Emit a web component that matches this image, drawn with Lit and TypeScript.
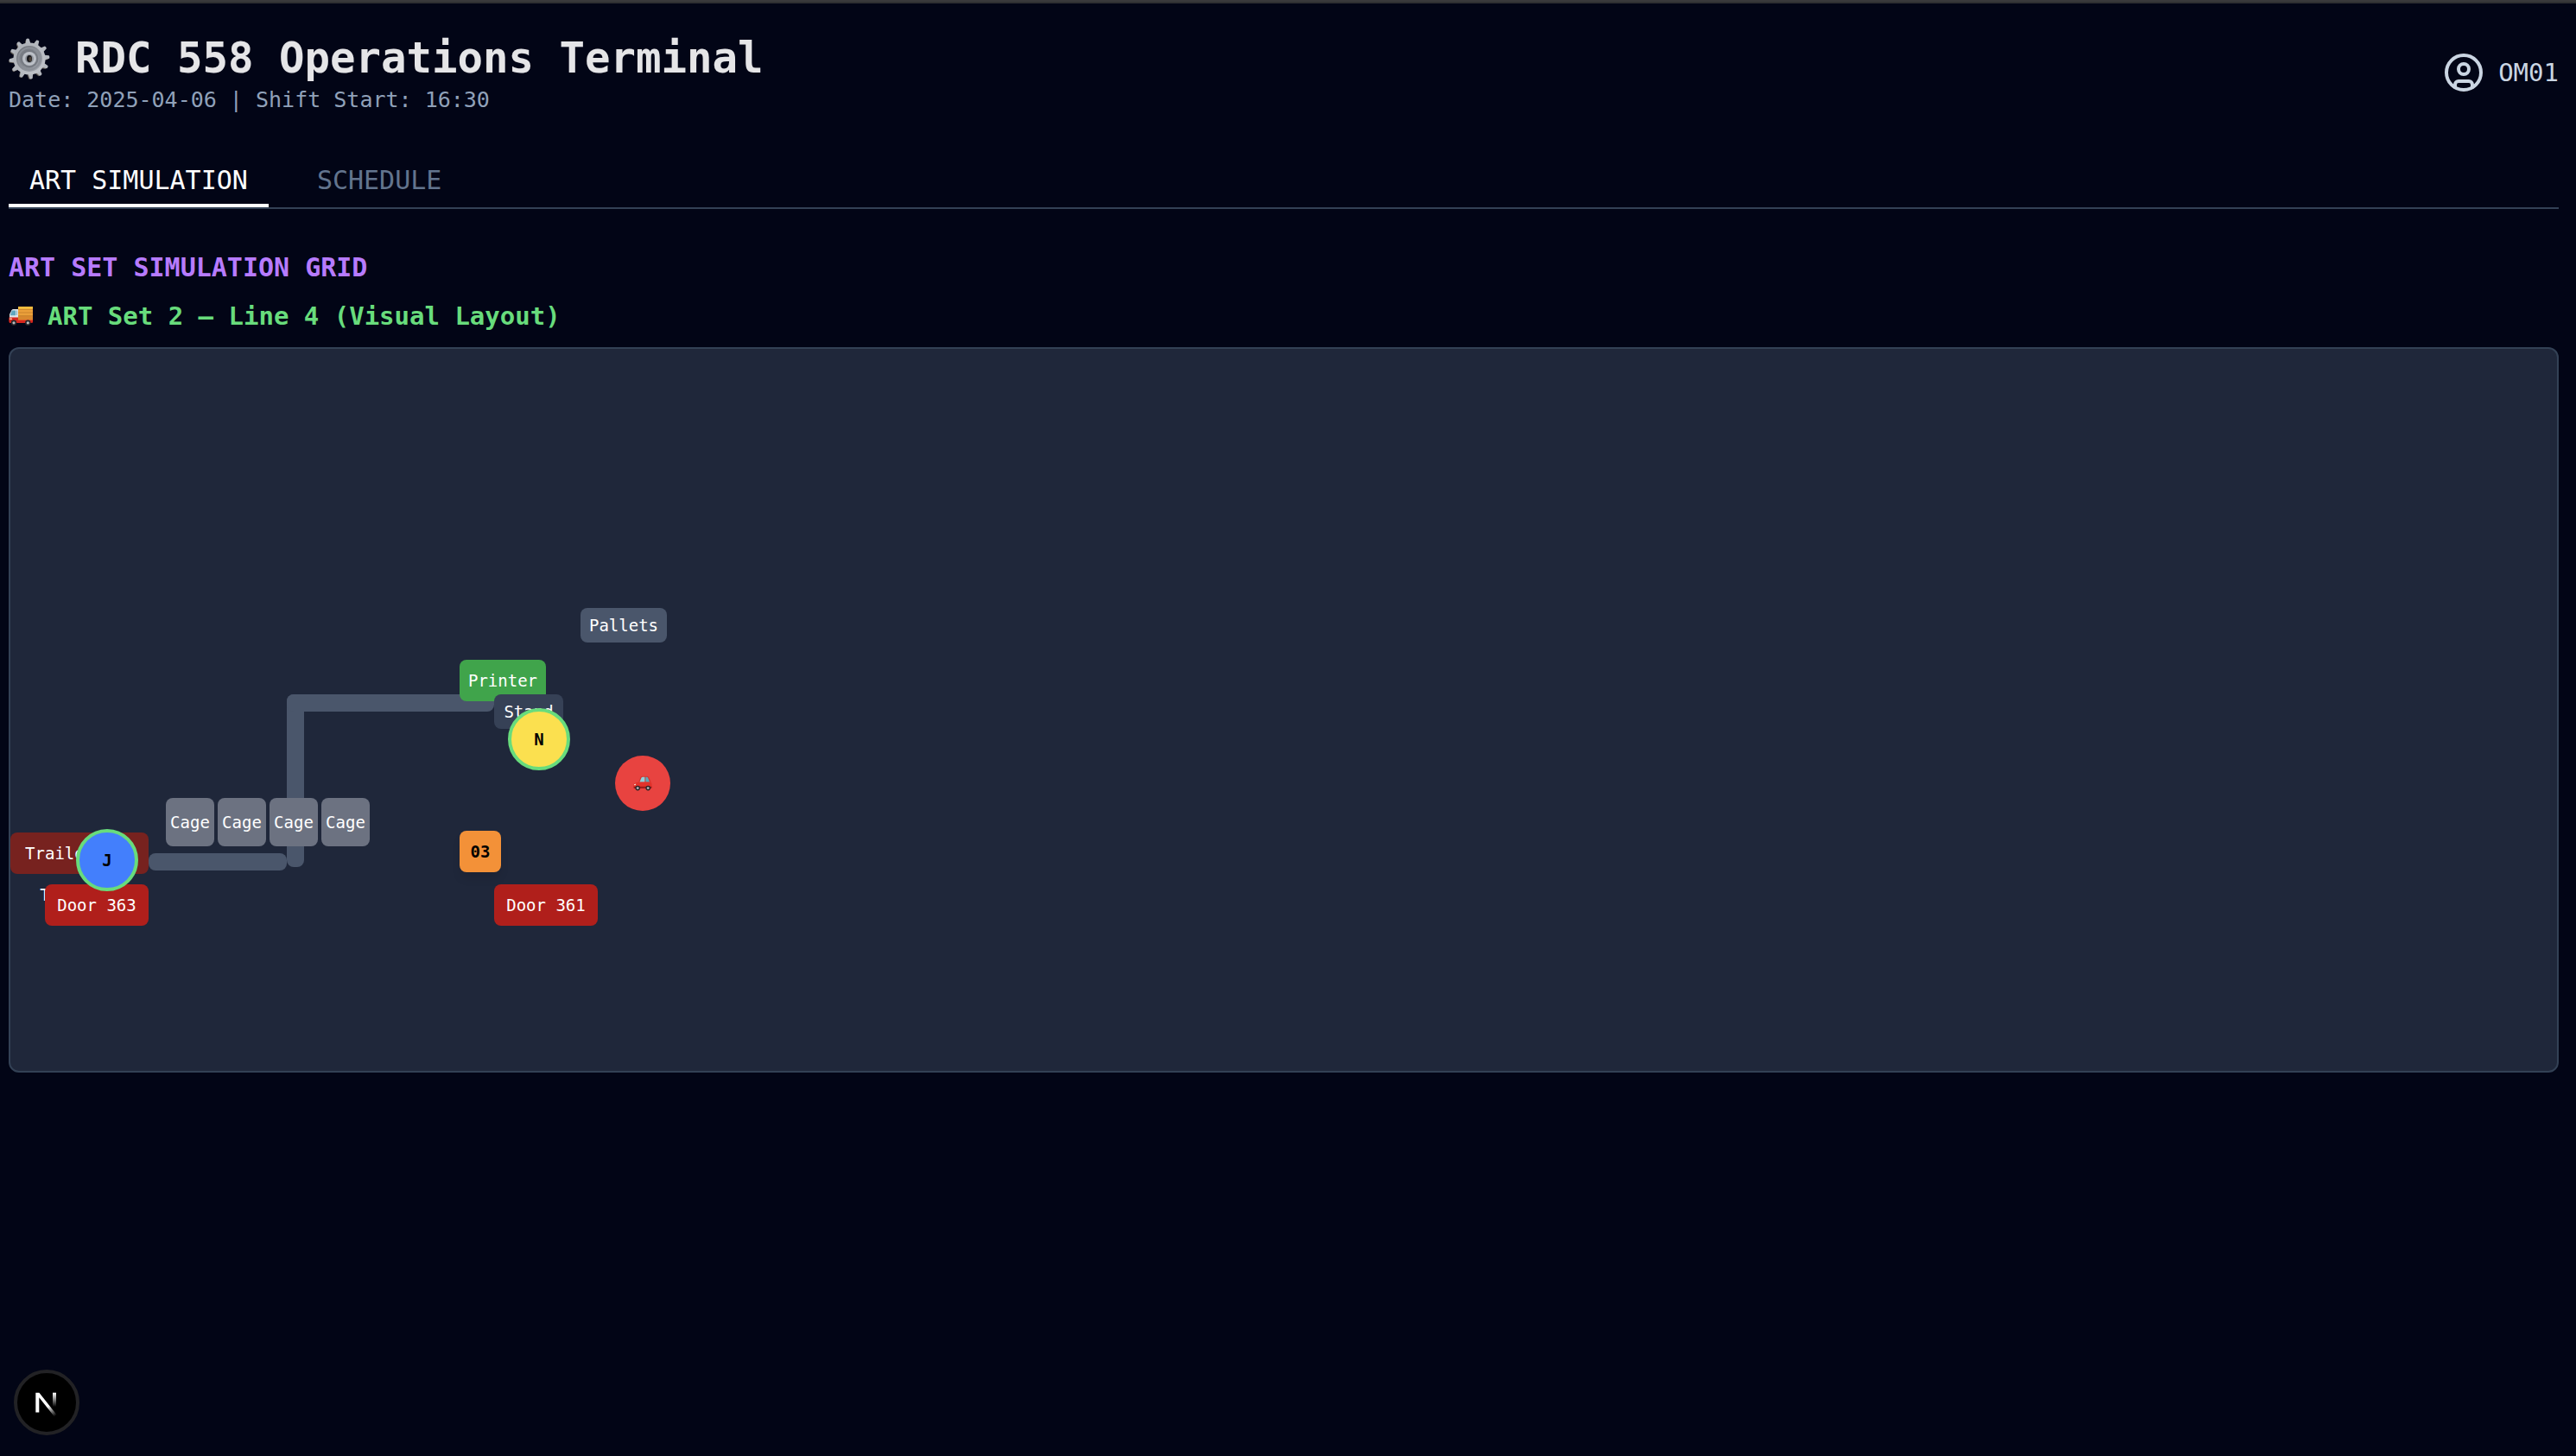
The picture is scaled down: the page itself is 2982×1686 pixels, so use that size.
import { LitElement, html, svg, css } from "lit";
import { customElement, state } from "lit/decorators.js";
import { styleMap } from "lit/directives/style-map.js";
import { classMap } from "lit/directives/class-map.js";

interface GridNode {
  kind: string;
  x: number;
  y: number;
  w: number;
  h: number;
  label?: string;
}

const NODES: GridNode[] = [
  { kind: "trailer", x: 0, y: 560, w: 160, h: 48, label: "Trailer 363" },
  { kind: "caption", x: 34, y: 608, w: 12, h: 48, label: "T" },
  { kind: "door", x: 40, y: 620, w: 120, h: 48, label: "Door 363" },
  { kind: "door", x: 560, y: 620, w: 120, h: 48, label: "Door 361" },
  { kind: "belt", x: 160, y: 584, w: 160, h: 20 },
  { kind: "belt", x: 320, y: 400, w: 20, h: 200 },
  { kind: "belt", x: 320, y: 400, w: 240, h: 20 },
  { kind: "cage", x: 180, y: 520, w: 56, h: 56, label: "Cage" },
  { kind: "cage", x: 240, y: 520, w: 56, h: 56, label: "Cage" },
  { kind: "cage", x: 300, y: 520, w: 56, h: 56, label: "Cage" },
  { kind: "cage", x: 360, y: 520, w: 56, h: 56, label: "Cage" },
  { kind: "printer", x: 520, y: 360, w: 100, h: 48, label: "Printer" },
  { kind: "stand", x: 560, y: 400, w: 80, h: 40, label: "Stand" },
  { kind: "pallets", x: 660, y: 300, w: 100, h: 40, label: "Pallets" },
  { kind: "slot", x: 520, y: 558, w: 48, h: 48, label: "03" },
  { kind: "worker blue", x: 76, y: 556, w: 72, h: 72, label: "J" },
  { kind: "worker yellow", x: 576, y: 416, w: 72, h: 72, label: "N" },
  { kind: "car", x: 700, y: 471, w: 64, h: 64 },
];

const TEETH = Array.from({ length: 12 }, (_, i) => i * 30 - 5);

const gearIcon = html`<svg class="gear" viewBox="0 0 48 48" aria-hidden="true">
  <defs>
    <linearGradient id="metal" x1="0" y1="0" x2="1" y2="1">
      <stop offset="0" stop-color="#a9adb3" />
      <stop offset="1" stop-color="#c3c6cc" />
    </linearGradient>
    <linearGradient id="ring" x1="0" y1="0" x2="1" y2="1">
      <stop offset="0" stop-color="#6b6f76" />
      <stop offset="1" stop-color="#a4a8b0" />
    </linearGradient>
  </defs>
  <g fill="#66615c">
    ${TEETH.map((a) => svg`<path transform=${`translate(-1 1) rotate(${a} 24 24)`} d="M21.2 7 22.4 1.6Q24 .6 25.6 1.6L27 7Z" />`)}
  </g>
  <g fill="#b4b8be">
    ${TEETH.map((a) => svg`<path transform=${`rotate(${a} 24 24)`} d="M21 8 22.3 1Q24 0 25.7 1L27.2 8Z" />`)}
  </g>
  <circle cx="24" cy="24" r="18.6" fill="url(#metal)" />
  <circle cx="24" cy="24" r="15" fill="url(#ring)" />
  <circle cx="24" cy="24" r="12.6" fill="none" stroke="#8b8f97" stroke-width="2" />
  <circle cx="24" cy="24" r="10.4" fill="#777b83" />
  <circle cx="24" cy="24" r="8" fill="#bcc0c7" />
  <circle cx="24" cy="24" r="5" fill="#8f939b" />
  <ellipse cx="24" cy="24" rx="3" ry="4" fill="#16161a" />
  <ellipse cx="25" cy="24.4" rx="1.6" ry="2.8" fill="#4a4038" />
</svg>`;

const truckIcon = html`<svg class="truck" viewBox="0 0 28 24" aria-hidden="true">
  <path d="M11 1h17v16H11z" fill="#eba03a" />
  <path d="M11 1h17v3H11z" fill="#f4bd3f" />
  <path d="M11 12h17v4H11z" fill="#d8882f" />
  <path d="M11 4.4h17M11 8h17M11 11.6h17" stroke="#bd7a28" stroke-width=".7" />
  <path d="M3.4 5.2Q4 4 5.6 4H11v10H1V10Z" fill="#dfe5e8" />
  <path d="M3.9 5.6H8v5.6H1.7Z" fill="#5fa6bd" />
  <path d="M8.8 5.6H10v5.4H8.8z" fill="#86b7c6" />
  <path d="M.4 13.4H11V16.4h17v3L26 20H1L.3 18Z" fill="#d8261d" />
  <path d="M1 14.6h3V16H1z" fill="#f7c7a5" />
  <circle cx="6" cy="19.8" r="3.2" fill="#28262a" />
  <circle cx="6" cy="19.8" r="1.6" fill="#b9bcc0" />
  <circle cx="22.3" cy="19.8" r="3.2" fill="#28262a" />
  <circle cx="22.3" cy="19.8" r="1.6" fill="#b9bcc0" />
</svg>`;

const carIcon = html`<svg class="car-icon" viewBox="0 0 22 18" aria-hidden="true">
  <path d="M6.2 7.6 8.4 2Q9 .8 10.6.8h5.2q1.6 0 2.4 1.2L20.6 7.4Z" fill="#d2352e" />
  <path d="M7.4 7.8 9.4 2.8Q9.8 1.8 11 1.8h2.4v6Z" fill="#8fd0dc" />
  <path d="M14.4 1.8h1.2q1 0 1.5.9l2 5.1h-4.7Z" fill="#5ea7b8" />
  <path d="M1.2 9.4Q3.4 7.6 7 7.4h13q1.6.6 1.6 3v3.2q0 1.4-1.4 1.4H1.6Q.4 15 .4 13.6v-2Q.4 10 1.2 9.4Z" fill="#e2322b" />
  <path d="M.6 12.8h20.8v1.4q-.2.9-1.2.9H1.6q-1 0-1-1.2Z" fill="#9c1d1a" />
  <path d="M1 10.2 3.2 9.6 2.8 11.2H1Z" fill="#f6d9cf" />
  <circle cx="5.2" cy="14.6" r="2.8" fill="#2b2528" />
  <circle cx="5.2" cy="14.6" r="1.4" fill="#b7b9bd" />
  <circle cx="17.2" cy="14.6" r="2.8" fill="#2b2528" />
  <circle cx="17.2" cy="14.6" r="1.4" fill="#b7b9bd" />
</svg>`;

@customElement("simulation-grid")
export class SimulationGrid extends LitElement {
  static styles = css`
    :host {
      display: block;
    }
    .grid {
      position: relative;
      box-sizing: border-box;
      height: 840px;
      overflow: hidden;
      border: 2px solid #334155;
      border-radius: 12px;
      background: #1f273a;
    }
    .node {
      position: absolute;
      box-sizing: border-box;
      display: flex;
      align-items: center;
      justify-content: center;
      border-radius: 8px;
      color: #fff;
      font-size: 19px;
      line-height: 24px;
      white-space: nowrap;
    }
    .trailer {
      background: #77221f;
    }
    .door {
      background: #b01f1b;
    }
    .belt {
      background: #4a566b;
    }
    .cage {
      background: #6c7281;
    }
    .printer {
      background: #40a44b;
    }
    .stand {
      background: #364156;
    }
    .pallets {
      background: #4a566b;
    }
    .slot {
      background: #f39138;
      color: #000;
      font-weight: 700;
      box-shadow: 0 8px 12px -2px rgba(0, 0, 0, 0.12);
    }
    .worker {
      border: 4px solid #68dc7c;
      border-radius: 50%;
      color: #000;
      font-weight: 700;
    }
    .blue {
      background: #437ffc;
    }
    .yellow {
      background: #fbe04f;
    }
    .car {
      border-radius: 50%;
      background: #e84340;
    }
    .car-icon {
      width: 22px;
      height: 18px;
    }
  `;

  render() {
    return html`<div class="grid">
      ${NODES.map(
        (n) => html`<div
          class="node ${n.kind}"
          style=${styleMap({
            left: `${n.x}px`,
            top: `${n.y}px`,
            width: `${n.w}px`,
            height: `${n.h}px`,
          })}
        >${n.kind === "car" ? carIcon : n.label}</div>`,
      )}
    </div>`;
  }
}

@customElement("app-root")
export class AppRoot extends LitElement {
  static styles = css`
    :host {
      display: block;
      min-height: 100vh;
      box-sizing: border-box;
      border-top: 2px solid #3a3a3c;
      background: #020516;
      color: #e5e5e7;
      font-family: "DejaVu Sans Mono", "Liberation Mono", monospace;
    }
    .page {
      padding: 32px 20px 32px 10px;
      border-top: 2px solid #2f3032;
    }
    .header {
      display: flex;
      align-items: center;
      justify-content: space-between;
      margin-bottom: 48px;
    }
    .title {
      display: flex;
      align-items: center;
      gap: 29px;
      margin: 0;
      font-size: 49px;
      line-height: 64px;
      font-weight: 700;
    }
    .gear {
      width: 48px;
      height: 48px;
    }
    .meta {
      margin: 0;
      color: #90a1b9;
      font-size: 25px;
      line-height: 32px;
    }
    .user {
      display: flex;
      align-items: center;
      gap: 16px;
      color: #cad5e2;
      font-size: 29px;
      line-height: 40px;
    }
    .user-icon {
      width: 48px;
      height: 48px;
    }
    .tabs {
      display: flex;
      gap: 32px;
      border-bottom: 2px solid #334155;
      margin-bottom: 48px;
    }
    .tab {
      padding: 9px 24px 7px;
      border: 0;
      border-bottom: 4px solid transparent;
      background: none;
      color: #62748e;
      font-family: inherit;
      font-size: 30px;
      line-height: 40px;
      font-weight: 500;
      cursor: pointer;
    }
    .active {
      border-bottom-color: #fff;
      color: #fff;
    }
    .section {
      margin: 0 0 16px;
      color: #b77bff;
      font-size: 30px;
      line-height: 40px;
      font-weight: 700;
    }
    .subtitle {
      display: flex;
      align-items: center;
      gap: 17px;
      margin: 0 0 16px;
      color: #68dc7c;
      font-size: 29px;
      line-height: 40px;
      font-weight: 700;
    }
    .truck {
      width: 28px;
      height: 24px;
    }
    .dev {
      position: fixed;
      left: 16px;
      bottom: 24px;
      box-sizing: border-box;
      width: 76px;
      height: 76px;
      padding: 0;
      border: 4px solid #222225;
      border-radius: 50%;
      background: #000;
      cursor: pointer;
    }
    .dev-icon {
      display: block;
      width: 68px;
      height: 68px;
    }
  `;

  @state() private tab = "ART SIMULATION";

  render() {
    return html`
      <main class="page">
        <header class="header">
          <div>
            <h1 class="title">${gearIcon}<span>RDC 558 Operations Terminal</span></h1>
            <p class="meta">Date: 2025-04-06 | Shift Start: 16:30</p>
          </div>
          <div class="user">
            <svg class="user-icon" viewBox="0 0 24 24" fill="none" stroke="currentColor" stroke-width="2" stroke-linecap="round" stroke-linejoin="round" aria-hidden="true">
              <circle cx="12" cy="12" r="10" />
              <circle cx="12" cy="10" r="3" />
              <path d="M7 20.662V19a2 2 0 0 1 2-2h6a2 2 0 0 1 2 2v1.662" />
            </svg>
            <span>OM01</span>
          </div>
        </header>
        <nav class="tabs">
          ${["ART SIMULATION", "SCHEDULE"].map(
            (name) => html`<button
              type="button"
              class=${classMap({ tab: true, active: this.tab === name })}
              @click=${() => (this.tab = name)}
            >${name}</button>`,
          )}
        </nav>
        <h2 class="section">ART SET SIMULATION GRID</h2>
        <h3 class="subtitle">${truckIcon}<span>ART Set 2 – Line 4 (Visual Layout)</span></h3>
        <simulation-grid></simulation-grid>
      </main>
      <button class="dev" type="button" aria-label="Open developer tools">
        <svg class="dev-icon" viewBox="0 0 68 68" fill="none" aria-hidden="true">
          <defs>
            <linearGradient id="diagonal" x1="36" y1="38" x2="45" y2="49" gradientUnits="userSpaceOnUse">
              <stop stop-color="#fff" />
              <stop offset="1" stop-color="#fff" stop-opacity="0" />
            </linearGradient>
            <linearGradient id="stem" x1="43" y1="23" x2="43" y2="39" gradientUnits="userSpaceOnUse">
              <stop stop-color="#fff" />
              <stop offset="1" stop-color="#fff" stop-opacity="0" />
            </linearGradient>
          </defs>
          <path d="M21.3 22.7H25.4L45.8 48.5 43 50.4 25.3 28.2V45.5H21.3Z" fill="url(#diagonal)" />
          <path d="M41 22.7h4V39h-4Z" fill="url(#stem)" />
        </svg>
      </button>
    `;
  }
}
